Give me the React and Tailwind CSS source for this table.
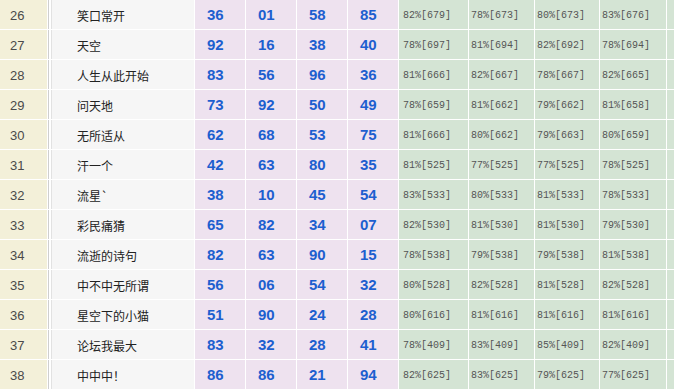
import React from 'react';

const rows = [
  [26, '笑口常开', ['36', '01', '58', '85'], ['82%[679]', '78%[673]', '80%[673]', '83%[676]']],
  [27, '天空', ['92', '16', '38', '40'], ['78%[697]', '81%[694]', '82%[692]', '78%[694]']],
  [28, '人生从此开始', ['83', '56', '96', '36'], ['81%[666]', '82%[667]', '78%[667]', '82%[665]']],
  [29, '问天地', ['73', '92', '50', '49'], ['78%[659]', '81%[662]', '79%[662]', '81%[658]']],
  [30, '无所适从', ['62', '68', '53', '75'], ['81%[666]', '80%[662]', '79%[663]', '80%[659]']],
  [31, '汗一个', ['42', '63', '80', '35'], ['81%[525]', '77%[525]', '77%[525]', '78%[525]']],
  [32, '流星`', ['38', '10', '45', '54'], ['83%[533]', '80%[533]', '81%[533]', '78%[533]']],
  [33, '彩民痛猜', ['65', '82', '34', '07'], ['82%[530]', '81%[530]', '81%[530]', '79%[530]']],
  [34, '流逝的诗句', ['82', '63', '90', '15'], ['78%[538]', '79%[538]', '79%[538]', '81%[538]']],
  [35, '中不中无所谓', ['56', '06', '54', '32'], ['80%[528]', '82%[528]', '81%[528]', '82%[528]']],
  [36, '星空下的小猫', ['51', '90', '24', '28'], ['80%[616]', '81%[616]', '81%[616]', '81%[616]']],
  [37, '论坛我最大', ['83', '32', '28', '41'], ['78%[409]', '83%[409]', '85%[409]', '82%[409]']],
  [38, '中中中！', ['86', '86', '21', '94'], ['82%[625]', '83%[625]', '79%[625]', '77%[625]']],
];

const greenWidths = ['w-[69px] pl-[4px]', 'w-[65px] pl-[2px]', 'w-[64px] pl-[2px]', 'w-[66px] pl-[2px]'];

function Row({ no, name, picks, rates }) {
  return (
    <div className="flex h-[29px] gap-px">
      <div className="w-[47px] shrink-0 bg-[#f3f0d9] flex items-center pl-[10px] pt-[2px] text-[13px] text-[#4a4a4a] font-['Liberation_Sans',sans-serif]">
        {no}
      </div>
      <div className="w-[146px] shrink-0 bg-[#f6f6f6] border-l border-[#cfcfcf] shadow-[inset_2px_0_#fff,inset_3px_0_#e2e2e2] flex items-center pl-[28px] pt-[2px] text-[12px] text-[#222] font-['Noto_Sans_CJK_SC',sans-serif]">
        {name}
      </div>
      {picks.map((p, i) => (
        <div
          key={i}
          className="w-[50px] shrink-0 bg-[#eee2ef] flex items-center pl-[12px] pt-[2px] text-[15px] font-bold text-[#1d5fcf] font-['Liberation_Sans',sans-serif]"
        >
          {p}
        </div>
      ))}
      {rates.map((r, i) => (
        <div
          key={i}
          className={`${greenWidths[i]} shrink-0 bg-[#d4e4d4] flex items-center pt-[2px] text-[10px] text-[#555] font-['Liberation_Mono',monospace]`}
        >
          {r}
        </div>
      ))}
      <div className="flex-1 bg-[#d4e4d4]" />
    </div>
  );
}

export default function App() {
  return (
    <div className="w-[674px] h-[389px] overflow-hidden bg-white flex flex-col gap-px">
      {rows.map(([no, name, picks, rates]) => (
        <Row key={no} no={no} name={name} picks={picks} rates={rates} />
      ))}
    </div>
  );
}
